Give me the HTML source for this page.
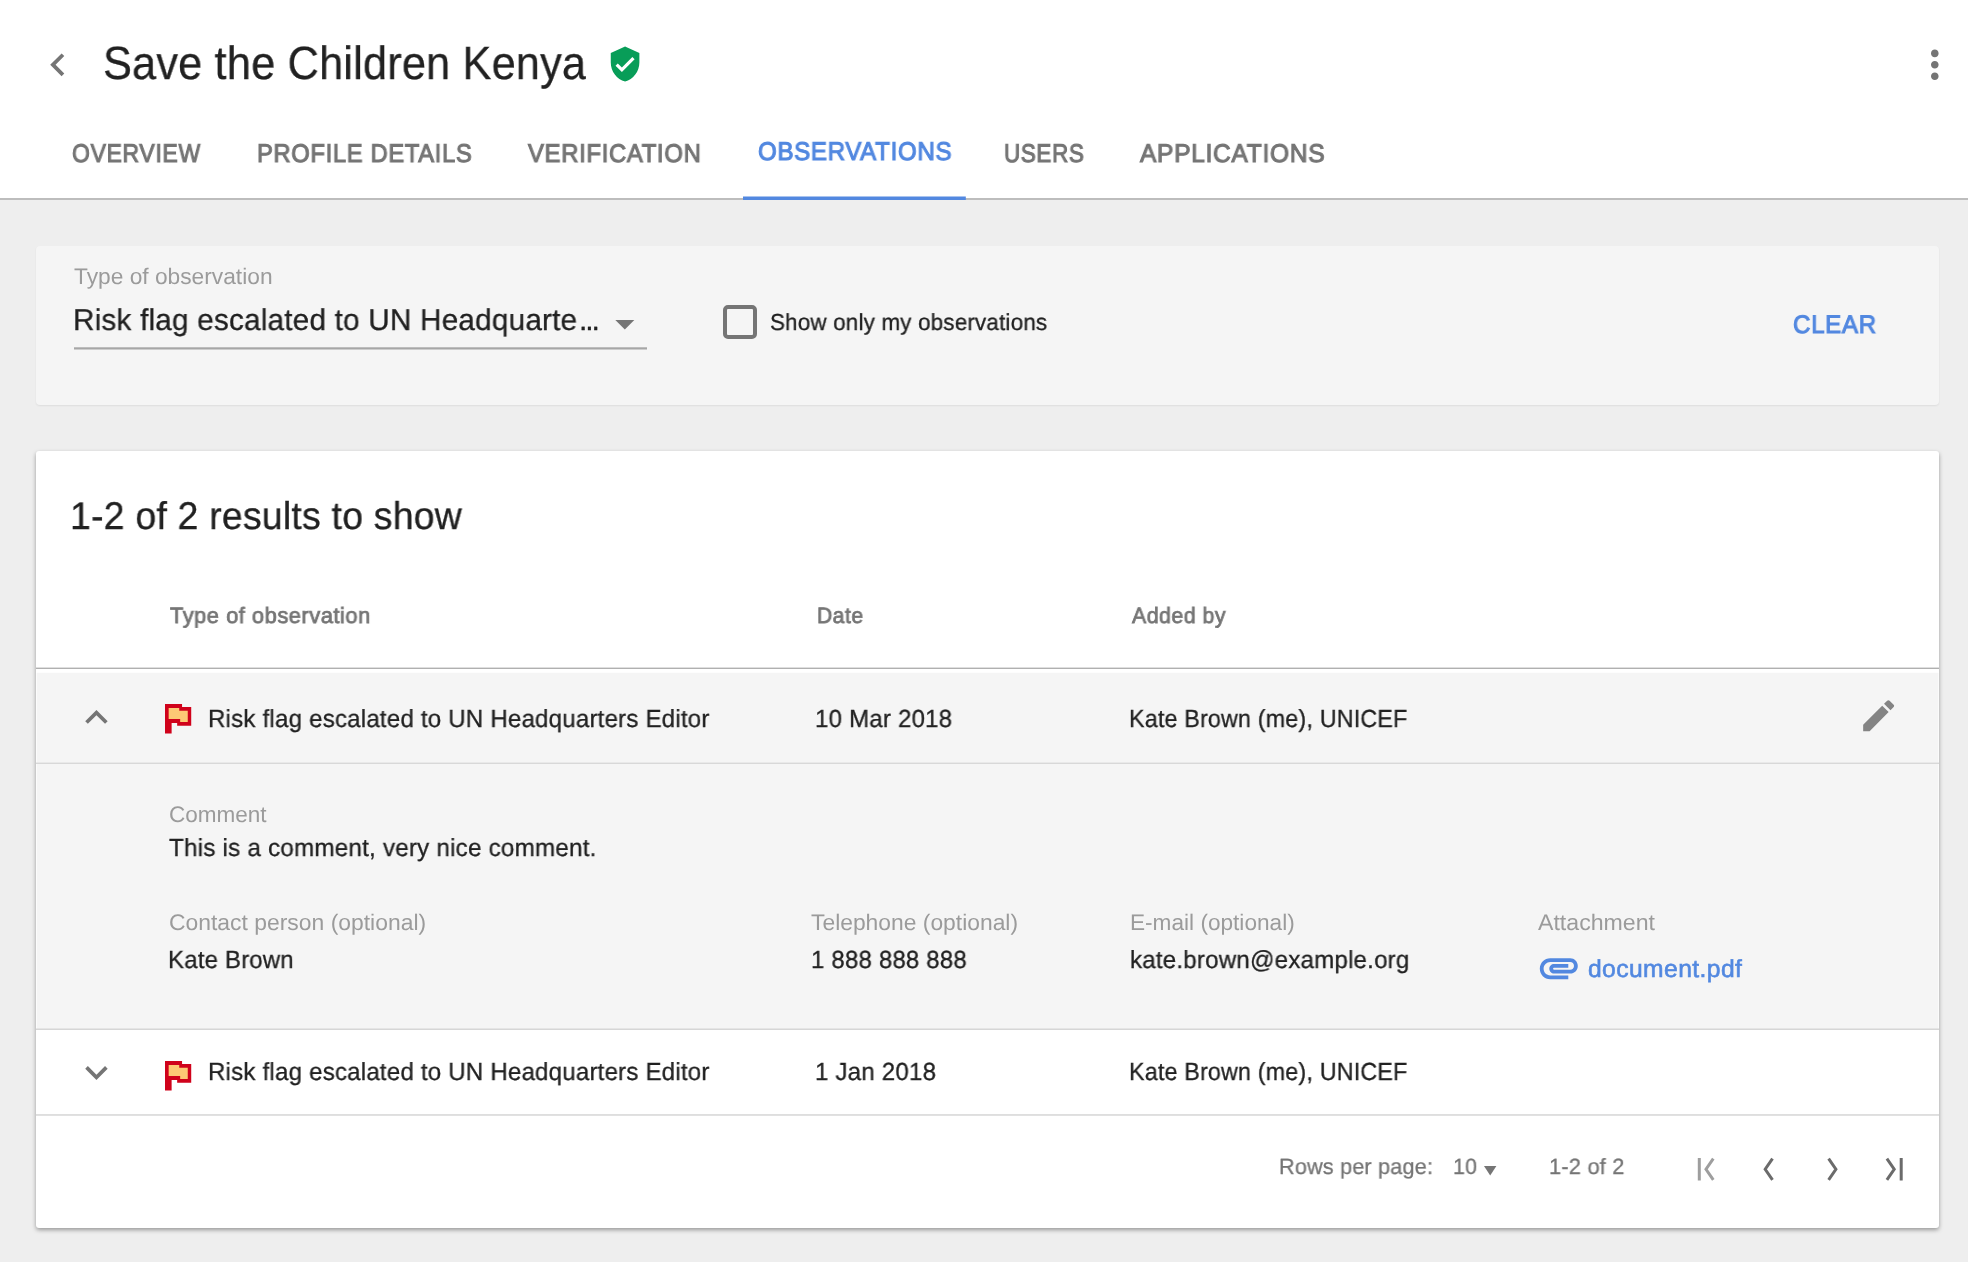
<!DOCTYPE html>
<html lang="en">
<head>
<meta charset="utf-8">
<title>Save the Children Kenya - Observations</title>
<style>
*{box-sizing:border-box;margin:0;padding:0}
html,body{width:1968px;height:1262px;overflow:hidden;background:#eeeeee;font-family:"Liberation Sans",sans-serif}
body{position:relative}
.t{will-change:transform;text-rendering:geometricPrecision;position:absolute;white-space:nowrap;line-height:1;transform-origin:0 50%;display:block;font-weight:400}
header{position:absolute;left:0;top:0;width:1968px;height:200px;background:#fff;border-bottom:2px solid #bdbdbd}
.filter{position:absolute;left:36px;top:246px;width:1903px;height:159px;background:#f5f5f5;border-radius:4px;box-shadow:0 1px 2px rgba(0,0,0,.07)}
.cb{position:absolute;left:723px;top:305px;width:34px;height:34px;border:4px solid #757575;border-radius:5px}
.card{position:absolute;left:36px;top:450.7px;width:1903px;height:777px;background:#fff;border-radius:3px;box-shadow:0 2px 4px rgba(0,0,0,.36)}
svg{position:absolute;overflow:visible}
</style>
</head>
<body>
<header>
  <svg style="left:35.45px;top:42.35px" width="45.6" height="45.6" viewBox="0 0 24 24"><path fill="#757575" d="M15.41 7.41L14 6l-6 6 6 6 1.41-1.41L10.83 12z"/></svg>
  <h1><span class="t" style="left:103.08px;top:39.50px;font-size:46.66px;color:#212121;letter-spacing:0.21px;transform:scaleX(0.9276);-webkit-text-stroke:0.3px #212121;">Save the Children Kenya</span></h1>
  <svg style="left:606.4px;top:44.5px" width="38.15" height="38.15" viewBox="0 0 24 24"><path fill="#089d58" d="M12 1L3 5v6c0 5.55 3.84 10.74 9 12 5.16-1.26 9-6.45 9-12V5l-9-4zm-2 16l-4-4 1.41-1.41L10 14.17l6.59-6.59L18 9l-8 8z"/></svg>
  <svg style="left:1912.4px;top:42.2px" width="45.6" height="45.6" viewBox="0 0 24 24"><path fill="#757575" d="M12 8c1.1 0 2-.9 2-2s-.9-2-2-2-2 .9-2 2 .9 2 2 2zm0 2c-1.1 0-2 .9-2 2s.9 2 2 2 2-.9 2-2-.9-2-2-2zm0 6c-1.1 0-2 .9-2 2s.9 2 2 2 2-.9 2-2-.9-2-2-2z"/></svg>
  <nav>
    <span class="t" style="left:71.90px;top:142.35px;font-size:25.58px;color:#757575;letter-spacing:0.77px;transform:scaleX(0.8974);-webkit-text-stroke:1.1px #757575;">OVERVIEW</span><span class="t" style="left:257.16px;top:142.35px;font-size:25.58px;color:#757575;letter-spacing:0.77px;transform:scaleX(0.9253);-webkit-text-stroke:1.1px #757575;">PROFILE DETAILS</span><span class="t" style="left:528.41px;top:142.35px;font-size:25.58px;color:#757575;letter-spacing:0.77px;transform:scaleX(0.9306);-webkit-text-stroke:1.1px #757575;">VERIFICATION</span><span class="t" style="left:758.18px;top:140.35px;font-size:25.58px;color:#5288e0;letter-spacing:0.77px;transform:scaleX(0.9392);-webkit-text-stroke:1.1px #5288e0;">OBSERVATIONS</span><span class="t" style="left:1003.51px;top:142.35px;font-size:25.58px;color:#757575;letter-spacing:0.77px;transform:scaleX(0.8743);-webkit-text-stroke:1.1px #757575;">USERS</span><span class="t" style="left:1139.93px;top:142.35px;font-size:25.58px;color:#757575;letter-spacing:0.77px;transform:scaleX(0.9574);-webkit-text-stroke:1.1px #757575;">APPLICATIONS</span>
    <svg style="left:740px;top:190px" width="230" height="12" viewBox="740 190 230 12"><rect x="743" y="196.5" width="222.8" height="3.5" fill="#5288e0"/></svg>
  </nav>
</header>

<section class="filter"></section>
<div class="filterc">
  <span class="t" style="left:74.20px;top:265.93px;font-size:22.53px;color:#9b9b9b;transform:scaleX(1.0103);">Type of observation</span>
  <span class="t" style="left:73.37px;top:305.53px;font-size:30.09px;color:#212121;letter-spacing:0.21px;transform:scaleX(0.9873);-webkit-text-stroke:0.3px #212121;">Risk flag escalated to UN Headquarte</span><span class="t" style="left:578.60px;top:305.53px;font-size:30.09px;color:#212121;letter-spacing:-2.11px;-webkit-text-stroke:0.3px #212121;">...</span>
  <svg style="left:601.7px;top:301.1px" width="45.6" height="45.6" viewBox="0 0 24 24"><path fill="#757575" d="M7 10l5 5 5-5z"/></svg>
  <svg style="left:70px;top:340px" width="580" height="12" viewBox="70 340 580 12"><rect x="74" y="347.3" width="573" height="2.2" fill="#a6a6a6"/></svg>
  <div class="cb"></div>
  <span class="t" style="left:770.18px;top:311.44px;font-size:23.11px;color:#212121;letter-spacing:0.21px;transform:scaleX(0.9678);-webkit-text-stroke:0.3px #212121;">Show only my observations</span>
  <span class="t" style="left:1793.17px;top:313.47px;font-size:25.44px;color:#5288e0;letter-spacing:0.77px;transform:scaleX(0.9460);-webkit-text-stroke:1.1px #5288e0;">CLEAR</span>
</div>

<section class="card"></section>
<div class="cardc">
  <h2><span class="t" style="left:69.91px;top:498.27px;font-size:38.66px;color:#212121;letter-spacing:0.21px;transform:scaleX(0.9687);-webkit-text-stroke:0.3px #212121;">1-2 of 2 results to show</span></h2>
  <span class="t" style="left:169.69px;top:605.17px;font-size:22.24px;color:#757575;letter-spacing:0.56px;transform:scaleX(0.9810);-webkit-text-stroke:0.8px #757575;">Type of observation</span><span class="t" style="left:816.63px;top:605.17px;font-size:22.24px;color:#757575;letter-spacing:0.56px;transform:scaleX(0.9484);-webkit-text-stroke:0.8px #757575;">Date</span><span class="t" style="left:1131.88px;top:605.17px;font-size:22.24px;color:#757575;letter-spacing:0.56px;transform:scaleX(0.9552);-webkit-text-stroke:0.8px #757575;">Added by</span>
  <svg style="left:36px;top:660px" width="1903" height="460" viewBox="36 660 1903 460">
    <rect x="36.7" y="672.8" width="1901.7" height="356.5" fill="#f5f5f5"/>
    <rect x="36" y="667.6" width="1903" height="1.4" fill="#b0b0b0"/>
    <rect x="36" y="762.6" width="1903" height="1.4" fill="#d8d8d8"/>
    <rect x="36" y="1028.5" width="1903" height="1.5" fill="#d6d6d6"/>
    <rect x="36" y="1114" width="1903" height="1.9" fill="#dedede"/>
  </svg>

  <!-- row 1 -->
  <svg style="left:73.7px;top:694.7px" width="44.9" height="44.9" viewBox="0 0 24 24"><path fill="#757575" d="M12 8l-6 6 1.41 1.41L12 10.83l4.59 4.58L18 14z"/></svg>
  <svg style="left:164.84px;top:704px" width="26.3" height="29.7" viewBox="0 0 26.3 29.7"><path fill="#d0021b" d="M0 0H17.06V3.09H26.22V21.64H12.16V18.94H6.62V29.59H0Z"/><path fill="#fdc975" d="M3.66 3.98H14.23V6.84H22.76V18H15.16V14.94H3.66Z"/></svg>
  <span class="t" style="left:207.90px;top:708.08px;font-size:24.71px;color:#212121;letter-spacing:0.21px;transform:scaleX(0.9745);-webkit-text-stroke:0.3px #212121;">Risk flag escalated to UN Headquarters Editor</span><span class="t" style="left:815.07px;top:708.08px;font-size:24.71px;color:#212121;letter-spacing:0.21px;transform:scaleX(0.9737);-webkit-text-stroke:0.3px #212121;">10 Mar 2018</span><span class="t" style="left:1129.26px;top:708.08px;font-size:24.71px;color:#212121;letter-spacing:0.21px;transform:scaleX(0.9413);-webkit-text-stroke:0.3px #212121;">Kate Brown (me), UNICEF</span>
  <svg style="left:1857.8px;top:694.6px" width="41.3" height="41.3" viewBox="0 0 24 24"><path fill="#848484" d="M3 17.25V21h3.75L17.81 9.94l-3.75-3.75L3 17.25zM20.71 7.04c.39-.39.39-1.02 0-1.41l-2.34-2.34c-.39-.39-1.02-.39-1.41 0l-1.83 1.83 3.75 3.75 1.83-1.83z"/></svg>

  <!-- details -->
  <span class="t" style="left:168.80px;top:803.93px;font-size:22.53px;color:#9b9b9b;transform:scaleX(0.9996);">Comment</span><span class="t" style="left:169.25px;top:837.08px;font-size:24.71px;color:#212121;letter-spacing:0.21px;transform:scaleX(0.9804);-webkit-text-stroke:0.3px #212121;">This is a comment, very nice comment.</span><span class="t" style="left:168.68px;top:911.93px;font-size:22.53px;color:#9b9b9b;transform:scaleX(1.0170);">Contact person (optional)</span><span class="t" style="left:167.91px;top:949.08px;font-size:24.71px;color:#212121;letter-spacing:0.21px;transform:scaleX(0.9697);-webkit-text-stroke:0.3px #212121;">Kate Brown</span><span class="t" style="left:811.20px;top:911.93px;font-size:22.53px;color:#9b9b9b;transform:scaleX(1.0146);">Telephone (optional)</span><span class="t" style="left:810.98px;top:949.08px;font-size:24.71px;color:#212121;letter-spacing:0.21px;transform:scaleX(0.9701);-webkit-text-stroke:0.3px #212121;">1 888 888 888</span><span class="t" style="left:1130.00px;top:911.93px;font-size:22.53px;color:#9b9b9b;transform:scaleX(1.0048);">E-mail (optional)</span><span class="t" style="left:1130.17px;top:949.08px;font-size:24.71px;color:#212121;letter-spacing:0.21px;transform:scaleX(0.9757);-webkit-text-stroke:0.3px #212121;">kate.brown@example.org</span><span class="t" style="left:1538.40px;top:911.93px;font-size:22.53px;color:#9b9b9b;transform:scaleX(1.0276);">Attachment</span>
  <svg style="left:1535.8px;top:944.8px" width="45.6" height="45.6" viewBox="0 0 24 24"><path fill="#5288e0" d="M2 12.5C2 9.46 4.46 7 7.5 7H18c2.21 0 4 1.79 4 4s-1.79 4-4 4H9.5C8.12 15 7 13.88 7 12.5S8.12 10 9.5 10H17v2H9.41c-.55 0-.55 1 0 1H18c1.1 0 2-.9 2-2s-.9-2-2-2H7.5C5.57 9 4 10.57 4 12.5S5.57 16 7.5 16H17v2H7.5C4.46 18 2 15.54 2 12.5z"/></svg>
  <span class="t" style="left:1587.70px;top:958.21px;font-size:24.56px;color:#5288e0;letter-spacing:0.42px;transform:scaleX(1.0036);-webkit-text-stroke:0.6px #5288e0;">document.pdf</span>

  <!-- row 2 -->
  <svg style="left:73.9px;top:1050.1px" width="44.9" height="44.9" viewBox="0 0 24 24"><path fill="#757575" d="M16.59 8.59L12 13.17 7.41 8.59 6 10l6 6 6-6z"/></svg>
  <svg style="left:164.84px;top:1061.06px" width="26.3" height="29.7" viewBox="0 0 26.3 29.7"><path fill="#d0021b" d="M0 0H17.06V3.09H26.22V21.64H12.16V18.94H6.62V29.59H0Z"/><path fill="#fdc975" d="M3.66 3.98H14.23V6.84H22.76V18H15.16V14.94H3.66Z"/></svg>
  <span class="t" style="left:207.90px;top:1061.08px;font-size:24.71px;color:#212121;letter-spacing:0.21px;transform:scaleX(0.9745);-webkit-text-stroke:0.3px #212121;">Risk flag escalated to UN Headquarters Editor</span><span class="t" style="left:815.02px;top:1061.08px;font-size:24.71px;color:#212121;letter-spacing:0.21px;transform:scaleX(0.9743);-webkit-text-stroke:0.3px #212121;">1 Jan 2018</span><span class="t" style="left:1129.26px;top:1061.08px;font-size:24.71px;color:#212121;letter-spacing:0.21px;transform:scaleX(0.9413);-webkit-text-stroke:0.3px #212121;">Kate Brown (me), UNICEF</span>

  <!-- footer -->
  <span class="t" style="left:1278.67px;top:1156.30px;font-size:22.09px;color:#757575;letter-spacing:0.21px;transform:scaleX(0.9780);-webkit-text-stroke:0.3px #757575;">Rows per page:</span><span class="t" style="left:1452.68px;top:1156.30px;font-size:22.09px;color:#757575;letter-spacing:0.21px;transform:scaleX(0.9668);-webkit-text-stroke:0.3px #757575;">10</span>
  <svg style="left:1484.4px;top:1165.5px" width="12.4" height="9.4" viewBox="0 0 12.4 9.4"><path fill="#757575" d="M0 0H12.4L6.2 9.4Z"/></svg>
  <span class="t" style="left:1548.81px;top:1156.30px;font-size:22.09px;color:#757575;letter-spacing:0.21px;transform:scaleX(0.9879);-webkit-text-stroke:0.3px #757575;">1-2 of 2</span>
  <svg style="left:1690px;top:1150px" width="230" height="40" viewBox="1690 1150 230 40" fill="none" stroke-width="3">
    <path stroke="#9e9e9e" d="M1699.3 1158V1180.5M1713.3 1158.6L1706 1169.25L1713.3 1179.9"/>
    <path stroke="#6b6b6b" d="M1772.5 1158.6L1765.2 1169.25L1772.5 1179.9"/>
    <path stroke="#6b6b6b" d="M1828.6 1158.6L1835.9 1169.25L1828.6 1179.9"/>
    <path stroke="#6b6b6b" d="M1886.9 1158.6L1894.2 1169.25L1886.9 1179.9M1901.2 1158V1180.5"/>
  </svg>
</div>
</body>
</html>
